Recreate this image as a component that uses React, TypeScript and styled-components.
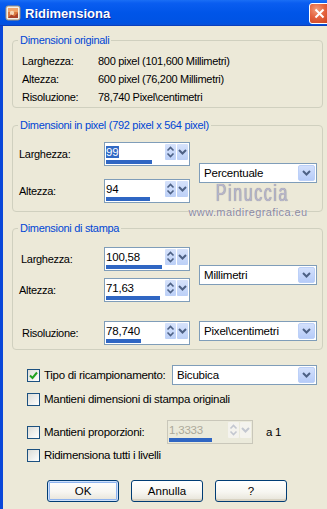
import React from "react";
import styled, { createGlobalStyle } from "styled-components";

const Global = createGlobalStyle`
  html, body { margin: 0; padding: 0; background: #ece9d8; }
  body {
    width: 327px; height: 509px; overflow: hidden;
    font-family: "Liberation Sans", Arial, sans-serif; font-size: 11px; color: #000;
    letter-spacing: -0.3px;
  }
  * { box-sizing: border-box; }
`;

const Window = styled.div`
  position: relative;
  width: 327px; height: 509px;
  display: flex; flex-direction: column;
  overflow: hidden; background: #ece9d8;
`;

const TitleBar = styled.div`
  flex: none; height: 26px;
  display: flex; align-items: center; gap: 4px;
  padding-left: 5px;
  background: linear-gradient(#1a6ef5 0%, #0a5df0 12%, #0055e8 50%, #0053e4 85%, #0a50d6 100%);
  box-shadow: inset 0 -1px 0 #0b3fbd;
`;

const Title = styled.span`
  color: #fff;
  font: bold 13px "Liberation Sans", Arial, sans-serif;
  letter-spacing: 0;
  text-shadow: 1px 1px 0 #0a2a9a;
`;

const CloseBtn = styled.div`
  flex: none; margin-left: auto; margin-right: -3px;
  width: 21px; height: 21px;
  border: 1px solid #fff; border-radius: 3px;
  background: radial-gradient(circle at 35% 30%, #f29d7c 0%, #e4623e 45%, #c93f1c 100%);
  display: flex; align-items: center; justify-content: center;
`;

const Body = styled.div`
  flex: 1;
  display: flex; flex-direction: column;
  border-left: 3px solid #0a47d9;
  padding: 7px 4px 0 9px;
`;

const Group = styled.fieldset<{ $mt: number; $pt: number; $pb: number }>`
  margin: ${(p) => p.$mt}px 0 0;
  padding: ${(p) => p.$pt}px 5px ${(p) => p.$pb}px;
  min-width: 0;
  border: 1px solid #d0d0bf;
  border-radius: 4px;
`;

const Legend = styled.legend`
  color: #0046d5;
  padding: 0 2px;
  line-height: 14px;
  font-size: 11px;
`;

const InfoGrid = styled.div`
  display: grid;
  grid-template-columns: 76px auto;
  grid-auto-rows: 18px;
  align-items: center;
  padding-left: 4px;
`;

const Text = styled.span<{ $ml?: number }>`
  margin-left: ${(p) => p.$ml ?? 0}px;
  white-space: nowrap;
`;

const SizeGrid = styled.div<{ $gap: number; $mt?: number }>`
  display: grid;
  grid-template-columns: 86px 95px 118px;
  grid-auto-rows: 24px;
  row-gap: ${(p) => p.$gap}px;
  margin-top: ${(p) => p.$mt ?? 0}px;
  align-items: center;
`;

const SelectCell = styled.div<{ $span: number; $dy?: number }>`
  grid-column: 3;
  grid-row: 1 / span ${(p) => p.$span};
  align-self: center;
  margin-top: ${(p) => p.$dy ?? 0}px;
`;

const SpinBox = styled.div<{ $disabled?: boolean; $w?: number }>`
  position: relative;
  width: ${(p) => p.$w ?? 86}px; height: 24px;
  border: 1px solid ${(p) => (p.$disabled ? "#c9c7ba" : "#7f9db9")};
  background: ${(p) => (p.$disabled ? "#ebeadb" : "#fff")};
  display: flex;
  padding: 1px 1px 0 1px;
`;

const SpinText = styled.div<{ $disabled?: boolean }>`
  flex: 1;
  line-height: 14px;
  padding: 1px 0 0 0;
  color: ${(p) => (p.$disabled ? "#aca899" : "#000")};
  font-size: 11.5px;
  letter-spacing: -0.2px;
`;

const Selected = styled.span`
  background: #316ac5; color: #fff;
  padding: 0 1px 0 0;
`;

const SpinButtons = styled.div`
  display: flex; gap: 1px; height: 16px;
`;

const SpinBtn = styled.div<{ $disabled?: boolean }>`
  width: 11px; height: 16px;
  background: ${(p) =>
    p.$disabled ? "#f4f3ee" : "linear-gradient(#d6e2fb, #bcd0f7)"};
  border-radius: 1px;
  display: flex; align-items: center; justify-content: center;
`;

const Progress = styled.div`
  position: absolute;
  left: 1px; bottom: 1px;
  height: 4px;
  background: #2f66c3;
`;

const Select = styled.div<{ $w: number }>`
  width: ${(p) => p.$w}px; height: 20px;
  border: 1px solid #7f9db9;
  background: #fff;
  display: flex; align-items: center;
  padding: 1px;
`;

const SelectText = styled.span`
  flex: 1; padding-left: 3px;
  font-size: 11.5px;
  letter-spacing: -0.2px;
`;

const SelectBtn = styled.div`
  width: 17px; height: 16px;
  border-radius: 2px;
  background: linear-gradient(#d3e0fc, #b6cbf8);
  border: 1px solid #bcd0f8;
  display: flex; align-items: center; justify-content: center;
`;

const CheckRow = styled.div<{ $mt: number; $h: number }>`
  display: flex; align-items: center;
  margin-top: ${(p) => p.$mt}px;
  height: ${(p) => p.$h}px;
  padding-left: 15px;
`;

const Box = styled.div`
  flex: none;
  width: 13px; height: 13px;
  border: 1px solid #1c5180;
  background: linear-gradient(135deg, #dcdcd7, #fff);
  display: flex; align-items: center; justify-content: center;
`;

const CheckLabel = styled.span<{ $w?: number }>`
  margin-left: 4px;
  font-size: 11.5px;
  white-space: nowrap;
  width: ${(p) => (p.$w ? `${p.$w}px` : "auto")};
  flex: none;
`;

const Ratio = styled.span`
  margin-left: 13px;
  font-size: 11.5px;
`;

const ButtonRow = styled.div`
  display: flex; gap: 12px;
  margin-top: 14px;
  padding-left: 35px;
`;

const Button = styled.div<{ $default?: boolean }>`
  width: 72px; height: 22px;
  border: 1px solid #003c74;
  border-radius: 3px;
  background: linear-gradient(#ffffff 0%, #f7f6f1 55%, #e6e3d8 100%);
  display: flex; align-items: center; justify-content: center;
  font-size: 11.5px;
  letter-spacing: 0;
  box-shadow: ${(p) =>
    p.$default
      ? "inset 0 0 0 1px #cee0fb, inset 0 0 0 2px #8fb4ee"
      : "inset 0 -2px 0 #d8d2c2"};
`;

const Watermark = styled.div`
  position: absolute;
  left: 186px; top: 180px;
  width: 124px;
  display: flex; flex-direction: column; align-items: center;
  pointer-events: none;
`;

const WmName = styled.span`
  font: 24px "Liberation Sans", Arial, sans-serif;
  letter-spacing: 2.5px;
  color: #b8b6ca;
  line-height: 26px;
  margin-left: 8px;
  transform: scaleX(0.66);
  text-shadow: 0 0 1px #77758e;
`;

const WmUrl = styled.span`
  font: 11px "Liberation Sans", Arial, sans-serif;
  color: #8a889e;
  line-height: 12px;
  letter-spacing: 0.4px;
  text-shadow: 0 0 1px #fff;
`;

const UpDown = ({ c = "#4d6185" }: { c?: string }) => (
  <svg width="11" height="16" viewBox="0 0 11 16">
    <path d="M2.5 6.5 L5.5 3.5 L8.5 6.5" fill="none" stroke={c} strokeWidth="1.6" />
    <path d="M2.5 9.5 L5.5 12.5 L8.5 9.5" fill="none" stroke={c} strokeWidth="1.6" />
  </svg>
);

const Chevron = ({ c = "#4d6185", w = 11 }: { c?: string; w?: number }) => (
  <svg width={w} height="10" viewBox="0 0 11 10">
    <path d="M2 3 L5.5 6.5 L9 3" fill="none" stroke={c} strokeWidth="2" />
  </svg>
);

type SpinProps = { value: string; pct: number; selected?: boolean; disabled?: boolean; w?: number };

const Spinner = ({ value, pct, selected, disabled, w }: SpinProps) => (
  <SpinBox $disabled={disabled} $w={w}>
    <SpinText $disabled={disabled}>{selected ? <Selected>{value}</Selected> : value}</SpinText>
    <SpinButtons>
      <SpinBtn $disabled={disabled}>
        <UpDown c={disabled ? "#c3c7d0" : "#4d6185"} />
      </SpinBtn>
      <SpinBtn $disabled={disabled}>
        <Chevron c={disabled ? "#c3c7d0" : "#4d6185"} />
      </SpinBtn>
    </SpinButtons>
    <Progress style={{ width: `${pct}px` }} />
  </SpinBox>
);

const Combo = ({ text, w = 118 }: { text: string; w?: number }) => (
  <Select $w={w}>
    <SelectText>{text}</SelectText>
    <SelectBtn>
      <Chevron />
    </SelectBtn>
  </Select>
);

const Check = ({ on }: { on?: boolean }) => (
  <Box>
    {on && (
      <svg width="11" height="11" viewBox="0 0 11 11">
        <path d="M2 5.5 L4.5 8 L9 2.5" fill="none" stroke="#21a121" strokeWidth="2" />
      </svg>
    )}
  </Box>
);

const AppIcon = () => (
  <svg width="16" height="16" viewBox="0 0 16 16">
    <rect x="1" y="1" width="14" height="14" rx="2" fill="#f4efe6" stroke="#a0917c" />
    <rect x="3" y="3" width="10" height="10" fill="#d9783f" />
    <rect x="3" y="3" width="10" height="4" fill="#efa36b" />
    <circle cx="7" cy="8" r="2.2" fill="#f7d7b8" />
    <path d="M3 13 L6.5 9.5 L9 11.5 L13 8 L13 13 Z" fill="#a9412a" />
  </svg>
);

export default function App() {
  return (
    <>
      <Global />
      <Window>
        <TitleBar>
          <AppIcon />
          <Title>Ridimensiona</Title>
          <CloseBtn>
            <svg width="11" height="11" viewBox="0 0 11 11">
              <path d="M1.5 1.5 L9.5 9.5 M9.5 1.5 L1.5 9.5" stroke="#fff" strokeWidth="2" />
            </svg>
          </CloseBtn>
        </TitleBar>
        <Body>
          <Group $mt={0} $pt={5} $pb={1}>
            <Legend>Dimensioni originali</Legend>
            <InfoGrid>
              <Text>Larghezza:</Text>
              <Text>800 pixel (101,600 Millimetri)</Text>
              <Text>Altezza:</Text>
              <Text>600 pixel (76,200 Millimetri)</Text>
              <Text>Risoluzione:</Text>
              <Text>78,740 Pixel\centimetri</Text>
            </InfoGrid>
          </Group>

          <Group $mt={10} $pt={10} $pb={8}>
            <Legend>Dimensioni in pixel (792 pixel x 564 pixel)</Legend>
            <SizeGrid $gap={13}>
              <Text $ml={1}>Larghezza:</Text>
              <Spinner value="99" pct={46} selected />
              <SelectCell $span={2}>
                <Combo text="Percentuale" />
              </SelectCell>
              <Text $ml={1}>Altezza:</Text>
              <Spinner value="94" pct={44} />
            </SizeGrid>
          </Group>

          <Group $mt={9} $pt={12} $pb={4}>
            <Legend>Dimensioni di stampa</Legend>
            <SizeGrid $gap={7}>
              <Text $ml={3}>Larghezza:</Text>
              <Spinner value="100,58" pct={56} />
              <SelectCell $span={2}>
                <Combo text="Millimetri" />
              </SelectCell>
              <Text $ml={1}>Altezza:</Text>
              <Spinner value="71,63" pct={54} />
            </SizeGrid>
            <SizeGrid $gap={0} $mt={19}>
              <Text $ml={4}>Risoluzione:</Text>
              <Spinner value="78,740" pct={35} />
              <SelectCell $span={1} $dy={-5}>
                <Combo text="Pixel\centimetri" />
              </SelectCell>
            </SizeGrid>
          </Group>

          <CheckRow $mt={15} $h={20}>
            <Check on />
            <CheckLabel $w={128}>Tipo di ricampionamento:</CheckLabel>
            <Combo text="Bicubica" w={145} />
          </CheckRow>
          <CheckRow $mt={4} $h={20}>
            <Check />
            <CheckLabel>Mantieni dimensioni di stampa originali</CheckLabel>
          </CheckRow>
          <CheckRow $mt={11} $h={24}>
            <Check />
            <CheckLabel $w={123}>Mantieni proporzioni:</CheckLabel>
            <Spinner value="1,3333" pct={43} disabled />
            <Ratio>a 1</Ratio>
          </CheckRow>
          <CheckRow $mt={0} $h={22}>
            <Check />
            <CheckLabel>Ridimensiona tutti i livelli</CheckLabel>
          </CheckRow>

          <ButtonRow>
            <Button $default>OK</Button>
            <Button>Annulla</Button>
            <Button>?</Button>
          </ButtonRow>
        </Body>
        <Watermark>
          <WmName>Pinuccia</WmName>
          <WmUrl>www.maidiregrafica.eu</WmUrl>
        </Watermark>
      </Window>
    </>
  );
}
